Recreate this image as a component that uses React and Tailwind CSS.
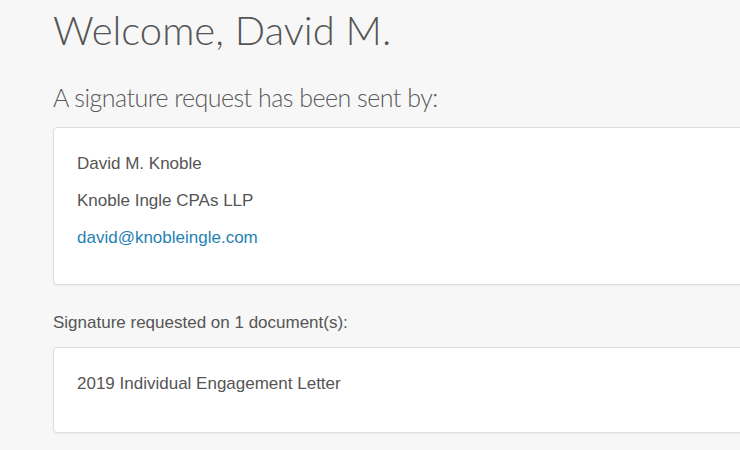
export default function App() {
  return (
    <div className="w-[740px] h-[450px] overflow-hidden bg-[#f7f7f7]">
      <div className="flex flex-col items-start pl-[53px] pt-[10px]">
        <h1 className="font-['Lato',sans-serif] text-[40px] leading-[40px] font-light text-[#555555]">
          Welcome, David M.
        </h1>
        <h2 className="mt-[33px] font-['Lato',sans-serif] text-[25px] leading-[28px] font-light tracking-[-0.5px] text-[#5a5a5a]">
          A signature request has been sent by:
        </h2>
        <div className="mt-[16px] w-[760px] flex flex-col bg-white border border-[#dedede] rounded-[4px] shadow-[0_1px_2px_rgba(0,0,0,0.05)] pl-[23px] pt-[17px] pb-[28px] font-['Liberation_Sans',Arial,sans-serif] text-[17px] leading-[37px] text-[#555555]">
          <p>David M. Knoble</p>
          <p>Knoble Ingle CPAs LLP</p>
          <p className="text-[#1f82b4]">david@knobleingle.com</p>
        </div>
        <p className="mt-[26px] font-['Liberation_Sans',Arial,sans-serif] text-[17px] leading-[24px] text-[#555555]">
          Signature requested on 1 document(s):
        </p>
        <div className="mt-[12px] w-[760px] bg-white border border-[#dedede] rounded-[4px] shadow-[0_1px_2px_rgba(0,0,0,0.05)] pl-[23px] pt-[24px] pb-[36px] font-['Liberation_Sans',Arial,sans-serif] text-[17px] leading-[24px] text-[#555555]">
          <p>2019 Individual Engagement Letter</p>
        </div>
      </div>
    </div>
  );
}
